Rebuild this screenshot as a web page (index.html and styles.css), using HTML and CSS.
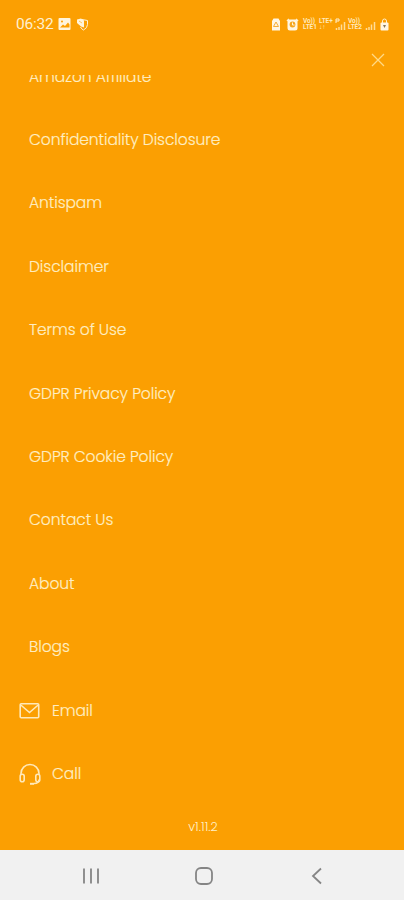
FILE: index.html
```
<!DOCTYPE html>
<html lang="en">
<head>
<meta charset="utf-8">
<title>Menu</title>
<link rel="stylesheet" href="styles.css">
</head>
<body>
<div class="screen">
  <header class="status">
    <span class="clock">06:32</span>
    <svg class="picture" width="13" height="12" viewBox="0 0 13 12"><rect x=".5" width="12" height="12" rx="1" fill="#fff4dc"/><path d="M2 9.500l3-3 2 1.500 3-3.500 1.500 2v3z" fill="#fb9f02"/><circle cx="4" cy="3.500" r="1" fill="#fb9f02"/></svg>
    <svg class="shield" width="13" height="13" viewBox="0 0 13 13"><path d="M6 1.500l5.500 1v4q0 3.500-4 5.500-2-.8-3-3" fill="none" stroke="#fff0cf"/><path d="M1 1.500l4-1 3 2v7L5 8.500 1 5z" fill="#fff4dc"/><path d="M3 3l3 2" stroke="#fb9f02" stroke-width=".6"/></svg>
    <span class="spacer"></span>
    <svg class="recycle" width="10" height="13" viewBox="0 0 10 13"><path d="M2.500.500h5l1.500 2.500v9.500H1V3z" fill="#fff6e2"/><path d="M5 4L2.500 8.500h5z" fill="none" stroke="#f5ad35"/></svg>
    <svg class="alarm" width="13" height="13" viewBox="0 0 13 13"><path d="M1 3l2-2M10 1l2 2" stroke="#fff0cf" stroke-width="1.500"/><rect x="1.500" y="1.500" width="10" height="11" rx="2.500" fill="#fff6e2"/><circle cx="6.500" cy="6.500" r="2.900" fill="#f5a61e"/><path d="M6.500 4.500v2.500h2" fill="none" stroke="#fff6e2"/></svg>
    <span class="network">Vo))<br>LTE1</span>
    <span class="network data">LTE+<br>↓↑</span>
    <svg class="signal" width="11" height="13" viewBox="0 0 11 13"><path d="M1.500 12v-2M4 12V9M6.500 12V6.500M9.500 12V4" stroke="#ffdc98" stroke-width="1.500"/><path d="M1 5V1h3v2H1" fill="none" stroke="#fff0cf"/></svg>
    <span class="network">Vo))<br>LTE2</span>
    <svg class="signal2" width="11" height="13" viewBox="0 0 11 13"><path d="M1.500 12v-2M4 12V9M6.500 12V6.500M9.500 12V4" stroke="#ffdc98" stroke-width="1.500"/></svg>
    <svg class="lock" width="9" height="13" viewBox="0 0 9 13"><path d="M2.500 6V3a2 2 0 0 1 4 0v3" fill="none" stroke="#fff0cf"/><rect x=".5" y="4.500" width="8" height="8" rx="1" fill="#fff6e2"/><path d="M3 7h3L4.500 10z" fill="#85765a"/></svg>
  </header>
  <div class="toolbar">
    <svg width="14" height="14" viewBox="0 0 14 14"><path d="M1 1l12 12M13 1L1 13" stroke="#ffda86" stroke-width="1.300"/></svg>
  </div>
  <nav class="menu">
    <a class="item">Amazon Affiliate</a>
    <a class="item">Confidentiality Disclosure</a>
    <a class="item">Antispam</a>
    <a class="item">Disclaimer</a>
    <a class="item">Terms of Use</a>
    <a class="item">GDPR Privacy Policy</a>
    <a class="item">GDPR Cookie Policy</a>
    <a class="item">Contact Us</a>
    <a class="item">About</a>
    <a class="item">Blogs</a>
    <a class="item with-icon"><svg width="22" height="22" viewBox="0 0 22 22"><rect x="1.200" y="3.800" width="18.500" height="14" rx="1"/><path d="M1.800 5l8.700 7.500L19.200 5"/></svg><span>Email</span></a>
    <a class="item with-icon"><svg width="22" height="24" viewBox="0 0 22 24"><path d="M2 13v-1.500a9 9 0 0 1 18 0V13M20 17.500c0 3-2 4-5 4"/><rect x="1.200" y="12.300" width="4" height="7.500" rx="2"/><rect x="16.800" y="12.300" width="4" height="7.500" rx="2"/><path d="M11 21.800h4" stroke-width="2"/></svg><span>Call</span></a>
  </nav>
  <div class="version">v1.11.2</div>
  <footer class="navbar">
    <svg width="18" height="18" viewBox="0 0 18 18"><path d="M2 1.500v15M9 1.500v15M16 1.500v15"/></svg>
    <svg width="18" height="18" viewBox="0 0 18 18"><rect x="1" y="1" width="16" height="16" rx="5"/></svg>
    <svg width="18" height="18" viewBox="0 0 18 18"><path d="M13 1.500L5 9l8 7.500"/></svg>
  </footer>
</div>
</body>
</html>
```
FILE: styles.css
```
* { box-sizing: border-box; }
body { margin: 0; background: #fb9f02; }
.screen { width: 404px; height: 900px; display: flex; flex-direction: column; background: #fb9f02; color: #fff0c8; font-family: Poppins, Inter, sans-serif; overflow: hidden; }
.status { height: 48px; flex: none; display: flex; align-items: center; padding: 0 15px 0 16px; }
.clock { font: 400 15.5px/20px Roboto, sans-serif; color: #fff0cf; width: 42px; letter-spacing: -.2px; }
.shield { margin-left: 5px; }
.spacer { flex: 1; }
.alarm { margin: 0 4px 0 5px; }
.network { width: 15px; font: 700 6.5px/6.5px Roboto, sans-serif; letter-spacing: -.1px; color: #ffe9bb; white-space: nowrap; }
.data { margin-left: 1px; }
.signal { margin: 0 2px 0 1px; }
.signal2 { margin: 0 4px 0 2px; }
.lock { flex: none; }
.toolbar { height: 27px; flex: none; display: flex; justify-content: flex-end; padding: 5px 19px 0 0; }
.menu { height: 730px; flex: none; overflow: hidden; }
.item { display: flex; align-items: center; height: 63.4px; padding-left: 29px; font-size: 15.5px; font-weight: 300; letter-spacing: -.08px; -webkit-text-stroke: .2px #ffe6ad; line-height: 24px; white-space: nowrap; }
.item:first-child { margin-top: -30px; }
.with-icon { padding-left: 19px; gap: 11px; }
.with-icon svg { fill: none; stroke: #ffe9ba; stroke-width: 1.6; flex: none; }
.version { height: 45px; flex: none; text-align: center; padding-left: 2px; font-size: 12.5px; font-weight: 300; line-height: 43px; }
.navbar { height: 50px; flex: none; background: #f1f1f1; display: flex; justify-content: space-between; align-items: center; padding: 2px 78px 0 82px; }
.navbar svg { fill: none; stroke: #858585; stroke-width: 1.8; }
```
